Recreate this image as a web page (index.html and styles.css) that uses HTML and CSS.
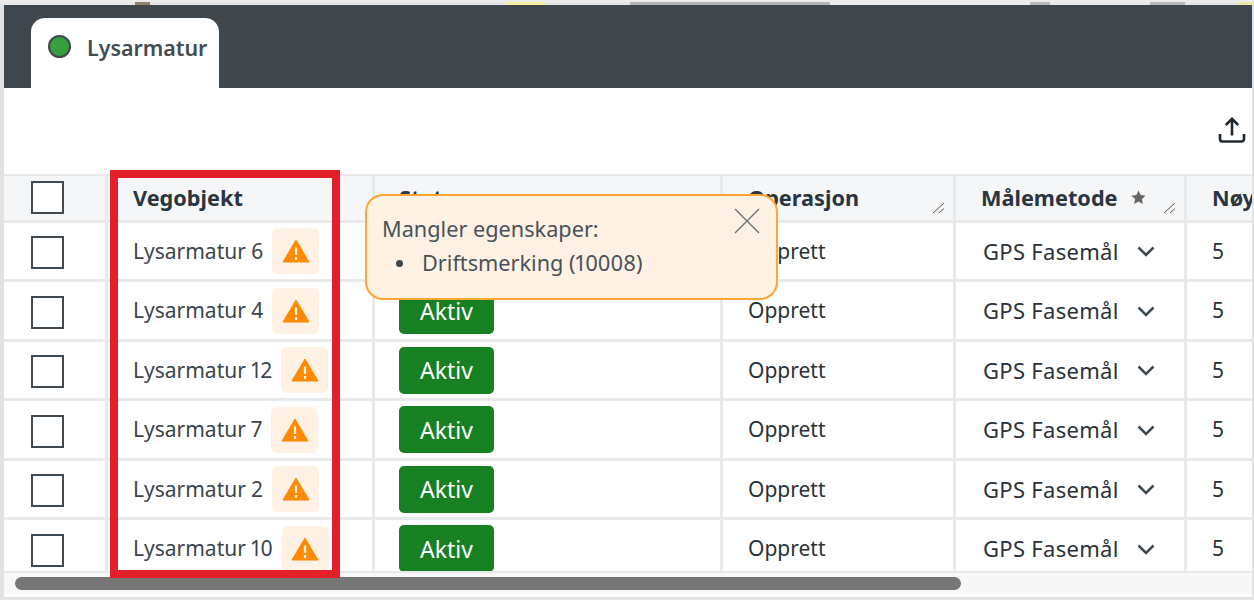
FILE: index.html
```html
<!DOCTYPE html>
<html lang="no">
<head>
<meta charset="utf-8">
<title>Lysarmatur</title>
<link rel="stylesheet" href="styles.css">
</head>
<body>
<div class="frame">
  <div class="map-strip"></div>
  <div class="tabbar">
    <div class="tab"><span class="dot"></span><span class="tab-label">Lysarmatur</span></div>
  </div>
  <div class="toolbar">
    <svg class="upload" width="28" height="28" viewBox="0 0 28 28" fill="none" stroke="#20282e" stroke-width="2.6"><path d="M14 19.500V3M7.800 9 14 2.800 20.200 9"/><path d="M2 18v5a2.500 2.500 0 0 0 2.500 2.500h19a2.500 2.500 0 0 0 2.500-2.500v-5"/></svg>
  </div>
  <div class="table">
    <div class="row head">
      <div class="cell check"><span class="box"></span></div>
      <div class="cell">Vegobjekt</div>
      <div class="cell status">Status</div>
      <div class="cell">Operasjon<svg class="grip" width="13" height="12" viewBox="0 0 13 12" fill="none" stroke="#555" stroke-width="1"><path d="M1 11 12 1M7 11l5-4.500"/></svg></div>
      <div class="cell">Målemetode<svg class="star" width="17" height="17" viewBox="0 0 24 24" fill="#666"><path d="m12 2 3 6.500 7 .9-5.200 4.800 1.400 7L12 17.700 5.800 21.200l1.400-7L2 9.400l7-.9z"/></svg><svg class="grip" width="13" height="12" viewBox="0 0 13 12" fill="none" stroke="#555" stroke-width="1"><path d="M1 11 12 1M7 11l5-4.500"/></svg></div>
      <div class="cell">Nøyaktighet</div>
    </div>
    <div class="row">
      <div class="cell check"><span class="box"></span></div>
      <div class="cell name">Lysarmatur 6<span class="warn"><svg width="28" height="24" viewBox="0 0 28 24"><path d="M14 1 27 23H1z" fill="#ff8a00" stroke="#ff8a00" stroke-linejoin="round"/><path d="M14 8.500v7.500M14 18v3" stroke="#fff1e3" stroke-width="2.200"/></svg></span></div>
      <div class="cell status"><span class="pill">Aktiv</span></div>
      <div class="cell">Opprett</div>
      <div class="cell select"><span class="sel-text">GPS Fasemåling</span><svg class="chev" width="18" height="11" viewBox="0 0 18 11" fill="none" stroke="#3d4a52" stroke-width="2.500"><path d="m1.500 1.500 7.500 7.500 7.500-7.500"/></svg></div>
      <div class="cell">5</div>
    </div>
    <div class="row">
      <div class="cell check"><span class="box"></span></div>
      <div class="cell name">Lysarmatur 4<span class="warn"><svg width="28" height="24" viewBox="0 0 28 24"><path d="M14 1 27 23H1z" fill="#ff8a00" stroke="#ff8a00" stroke-linejoin="round"/><path d="M14 8.500v7.500M14 18v3" stroke="#fff1e3" stroke-width="2.200"/></svg></span></div>
      <div class="cell status"><span class="pill">Aktiv</span></div>
      <div class="cell">Opprett</div>
      <div class="cell select"><span class="sel-text">GPS Fasemåling</span><svg class="chev" width="18" height="11" viewBox="0 0 18 11" fill="none" stroke="#3d4a52" stroke-width="2.500"><path d="m1.500 1.500 7.500 7.500 7.500-7.500"/></svg></div>
      <div class="cell">5</div>
    </div>
    <div class="row">
      <div class="cell check"><span class="box"></span></div>
      <div class="cell name">Lysarmatur 12<span class="warn"><svg width="28" height="24" viewBox="0 0 28 24"><path d="M14 1 27 23H1z" fill="#ff8a00" stroke="#ff8a00" stroke-linejoin="round"/><path d="M14 8.500v7.500M14 18v3" stroke="#fff1e3" stroke-width="2.200"/></svg></span></div>
      <div class="cell status"><span class="pill">Aktiv</span></div>
      <div class="cell">Opprett</div>
      <div class="cell select"><span class="sel-text">GPS Fasemåling</span><svg class="chev" width="18" height="11" viewBox="0 0 18 11" fill="none" stroke="#3d4a52" stroke-width="2.500"><path d="m1.500 1.500 7.500 7.500 7.500-7.500"/></svg></div>
      <div class="cell">5</div>
    </div>
    <div class="row">
      <div class="cell check"><span class="box"></span></div>
      <div class="cell name">Lysarmatur 7<span class="warn"><svg width="28" height="24" viewBox="0 0 28 24"><path d="M14 1 27 23H1z" fill="#ff8a00" stroke="#ff8a00" stroke-linejoin="round"/><path d="M14 8.500v7.500M14 18v3" stroke="#fff1e3" stroke-width="2.200"/></svg></span></div>
      <div class="cell status"><span class="pill">Aktiv</span></div>
      <div class="cell">Opprett</div>
      <div class="cell select"><span class="sel-text">GPS Fasemåling</span><svg class="chev" width="18" height="11" viewBox="0 0 18 11" fill="none" stroke="#3d4a52" stroke-width="2.500"><path d="m1.500 1.500 7.500 7.500 7.500-7.500"/></svg></div>
      <div class="cell">5</div>
    </div>
    <div class="row">
      <div class="cell check"><span class="box"></span></div>
      <div class="cell name">Lysarmatur 2<span class="warn"><svg width="28" height="24" viewBox="0 0 28 24"><path d="M14 1 27 23H1z" fill="#ff8a00" stroke="#ff8a00" stroke-linejoin="round"/><path d="M14 8.500v7.500M14 18v3" stroke="#fff1e3" stroke-width="2.200"/></svg></span></div>
      <div class="cell status"><span class="pill">Aktiv</span></div>
      <div class="cell">Opprett</div>
      <div class="cell select"><span class="sel-text">GPS Fasemåling</span><svg class="chev" width="18" height="11" viewBox="0 0 18 11" fill="none" stroke="#3d4a52" stroke-width="2.500"><path d="m1.500 1.500 7.500 7.500 7.500-7.500"/></svg></div>
      <div class="cell">5</div>
    </div>
    <div class="row last">
      <div class="cell check"><span class="box"></span></div>
      <div class="cell name">Lysarmatur 10<span class="warn"><svg width="28" height="24" viewBox="0 0 28 24"><path d="M14 1 27 23H1z" fill="#ff8a00" stroke="#ff8a00" stroke-linejoin="round"/><path d="M14 8.500v7.500M14 18v3" stroke="#fff1e3" stroke-width="2.200"/></svg></span></div>
      <div class="cell status"><span class="pill">Aktiv</span></div>
      <div class="cell">Opprett</div>
      <div class="cell select"><span class="sel-text">GPS Fasemåling</span><svg class="chev" width="18" height="11" viewBox="0 0 18 11" fill="none" stroke="#3d4a52" stroke-width="2.500"><path d="m1.500 1.500 7.500 7.500 7.500-7.500"/></svg></div>
      <div class="cell">5</div>
    </div>
  </div>
  <div class="scrolltrack"><div class="scrollthumb"></div></div>
  <div class="highlight"></div>
  <div class="tooltip">
    <div class="tip-title">Mangler egenskaper:</div>
    <ul class="tip-list"><li>Driftsmerking (10008)</li></ul>
    <svg class="tip-close" width="26" height="26" viewBox="0 0 26 26" fill="none" stroke="#6b6f72" stroke-width="1.300"><path d="m1 1 24 24M25 1 1 25"/></svg>
  </div>
</div>
</body>
</html>
```
FILE: styles.css
```css
* { box-sizing: border-box; }
html, body { margin: 0; height: 100%; }
body { background: #fff; overflow: hidden; }
.frame {
  position: relative;
  width: 1254px;
  height: 600px;
  padding: 0 2px 3px 4px;
  display: flex;
  flex-direction: column;
  background: #e2e2e2;
  font-family: "Noto Sans", sans-serif;
  font-size: 21px;
  font-variant-numeric: proportional-nums;
  color: #2a3238;
  overflow: hidden;
}
.map-strip {
  height: 5px;
  flex: none;
  margin: 0 -2px 0 -4px;
  border-top: 2px solid #ececec;
  background: linear-gradient(90deg,
    #e8e8e8 0 135px, #8d8565 135px 150px, #e4e4e4 150px 505px,
    #f5f0a0 505px 545px, #e6e6e6 545px 630px,
    #b4b4b4 630px 830px, #ececec 830px 1030px,
    #b8b8b8 1030px 1050px, #e8e8e8 1050px 1150px,
    #b8b8b8 1150px 1185px, #e6e6e6 1185px 1238px,
    #eee8a8 1238px 1254px);
}
.tabbar {
  height: 83px;
  flex: none;
  background: #3f474d;
  padding: 13px 0 0 27px;
  display: flex;
}
.tab {
  width: 188px;
  background: #fff;
  border-radius: 14px 14px 0 0;
  display: flex;
  align-items: flex-start;
  padding: 17px 0 0 17px;
  gap: 16px;
}
.dot {
  width: 23px;
  height: 23px;
  border-radius: 50%;
  background: #35a03c;
  border: 2.500px solid #3f474d;
  flex: none;
}
.tab-label { font-weight: 600; color: #444c53; line-height: 26px; font-size: 21.400px; }
.toolbar {
  height: 86px;
  flex: none;
  background: #fff;
  display: flex;
  justify-content: flex-end;
  align-items: flex-start;
  padding-top: 28px;
  overflow: hidden;
}
.upload { margin-right: 6px; flex: none; }
.table {
  flex: 1;
  min-height: 0;
  background: #fff;
  overflow: hidden;
  border-top: 2px solid #e8e9ea;
}
.row {
  display: grid;
  grid-template-columns: 104px 267px 348px 233px 231px 100px;
  height: 59.500px;
  border-bottom: 3px solid #e8e9ea;
}
.row.head { height: 46.500px; background: #f5f6f8; font-weight: 700; }
.row.head .cell { color: #2a3540; font-size: 21.700px; }
.row.last { border-bottom-color: transparent; }
.cell {
  position: relative;
  display: flex;
  align-items: center;
  padding-left: 25px;
  border-right: 3px solid #e8e9ea;
  white-space: nowrap;
  overflow: hidden;
}
.cell:last-child { border-right: 0; }
.cell.check { padding-left: 27px; }
.cell.status { padding-left: 24px; }
.box {
  width: 33px;
  height: 33px;
  border: 2px solid #3f4a52;
  background: #fff;
  flex: none;
  margin-top: 4px;
}
.head .box { margin-top: 0; }
.name { color: #3b444b; gap: 9px; }
.warn {
  width: 47px;
  height: 46px;
  margin-top: 1px;
  background: #fff1e3;
  border-radius: 6px;
  display: flex;
  align-items: center;
  justify-content: center;
  flex: none;
}
.pill {
  background: #178023;
  color: #fff;
  border-radius: 5px;
  width: 95px;
  height: 47px;
  margin-top: 1px;
  font-size: 23px;
  display: flex;
  align-items: center;
  justify-content: center;
}
.select { padding-left: 27px; }
.sel-text { width: 134px; overflow: hidden; flex: none; font-size: 22px; letter-spacing: .3px; }
.chev { margin-left: 20px; margin-top: 2px; flex: none; }
.star { margin-left: 12px; flex: none; }
.grip { position: absolute; right: 8px; bottom: 6px; }
.scrolltrack {
  height: 26px;
  flex: none;
  background: #f7f7f7;
  border-top: 2px solid #e8e9ea;
  border-bottom: 3px solid #fff;
  padding: 4px 0 0 11px;
}
.scrollthumb {
  width: 946px;
  height: 13px;
  background: #767676;
  border-radius: 7px;
}
.highlight {
  position: absolute;
  left: 110px;
  top: 170px;
  width: 230px;
  height: 408px;
  border: 8px solid #e3202a;
  pointer-events: none;
}
.tooltip {
  position: absolute;
  left: 365px;
  top: 194px;
  width: 413px;
  height: 106px;
  background: #fff1e3;
  border: 2px solid #ffa633;
  border-radius: 18px;
  padding: 16px 15px;
  color: #4a5259;
  font-size: 21.700px;
  line-height: 34px;
}
.tip-list { margin: 0; padding: 0 0 0 14px; list-style: none; }
.tip-list li { display: flex; align-items: center; gap: 19px; }
.tip-list li::before {
  content: "";
  width: 7px;
  height: 7px;
  border-radius: 50%;
  background: #3f474d;
  flex: none;
}
.tip-close { position: absolute; right: 16px; top: 12px; }
```
